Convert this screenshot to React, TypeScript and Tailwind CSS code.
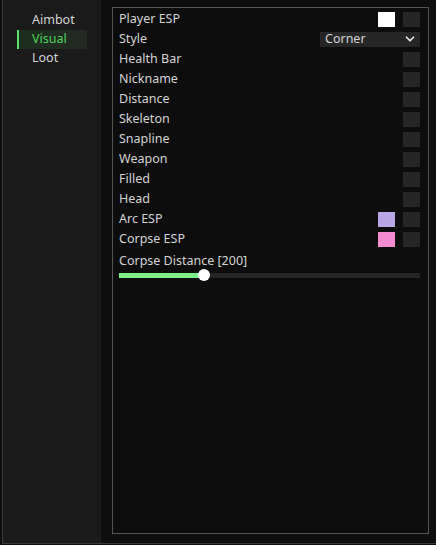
import { ChevronDown } from 'lucide-react'

const rows: { label: string; color?: string; combo?: string }[] = [
  { label: 'Player ESP', color: '#ffffff' },
  { label: 'Style', combo: 'Corner' },
  { label: 'Health Bar' },
  { label: 'Nickname' },
  { label: 'Distance' },
  { label: 'Skeleton' },
  { label: 'Snapline' },
  { label: 'Weapon' },
  { label: 'Filled' },
  { label: 'Head' },
  { label: 'Arc ESP', color: '#b9a6e6' },
  { label: 'Corpse ESP', color: '#f58bd0' },
]

function Checkbox() {
  return <div className="w-[17px] h-[15px] bg-[#262626]" />
}

function Row({ label, color, combo }: { label: string; color?: string; combo?: string }) {
  return (
    <div className="flex items-center h-[20px]">
      <span className="mr-auto">{label}</span>
      {combo ? (
        <div className="flex items-center justify-between w-[100px] h-[15px] bg-[#262626] pl-[5px] pr-[3px]">
          <span>{combo}</span>
          <ChevronDown size={14} strokeWidth={3} className="text-[#e8e8e8]" />
        </div>
      ) : (
        <>
          {color && <div className="w-[17px] h-[15px] mr-[8px]" style={{ background: color }} />}
          <Checkbox />
        </>
      )}
    </div>
  )
}

function Sidebar() {
  const tabs = ['Aimbot', 'Visual', 'Loot']
  return (
    <div className="w-[98px] h-full bg-[#1a1a1a] pt-[11px] pl-[14px]">
      {tabs.map((t) => (
        <div
          key={t}
          className={
            t === 'Visual'
              ? 'flex items-center h-[19px] w-[70px] border-l-[2px] border-[#5ee36e] bg-gradient-to-r from-[#1c2e1e] to-[#232a23] text-[#4fd35c] pl-[13px]'
              : 'flex items-center h-[19px] pl-[15px] text-[#d6d6d6]'
          }
        >
          {t}
        </div>
      ))}
    </div>
  )
}

export default function App() {
  return (
    <div
      className="w-[436px] h-[545px] bg-[#0e0e0e] text-[12.5px] text-[#d4d4d4] overflow-hidden"
      style={{ fontFamily: '"Noto Sans", "DejaVu Sans", sans-serif' }}
    >
      <div className="ml-[2px] h-[544px] flex border-l border-b border-[#3a3a3a]">
        <Sidebar />
        <div className="flex-1 pl-[11px] pt-[7px] pr-[7px] pb-[9px]">
          <div className="h-full border border-[#555555] bg-[#0d0d0d] pl-[6px] pr-[8px] pt-[1px]">
            {rows.map((r) => (
              <Row key={r.label} {...r} />
            ))}
            <div className="mt-[3px]">Corpse Distance [200]</div>
            <div className="relative h-[5px] bg-[#262626] mt-[2px]">
              <div className="h-full w-[85px] bg-[#7ef08a]" />
              <div className="absolute top-1/2 left-[85px] w-[12px] h-[12px] -translate-x-1/2 -translate-y-1/2 rounded-full bg-white" />
            </div>
          </div>
        </div>
      </div>
    </div>
  )
}
